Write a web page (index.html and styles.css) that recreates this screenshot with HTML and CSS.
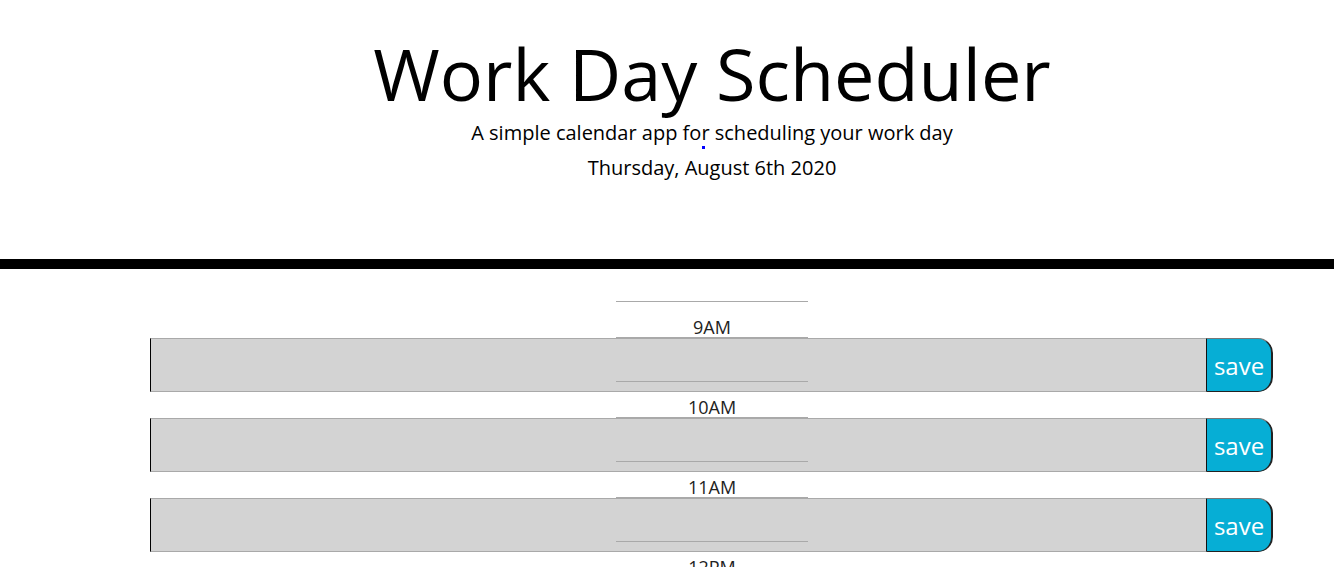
FILE: index.html
```html
<!DOCTYPE html>
<html lang="en">
<head>
<meta charset="utf-8">
<title>Work Day Scheduler</title>
<link rel="stylesheet" href="styles.css">
</head>
<body>
<header class="jumbotron">
  <div class="jumbo-inner">
    <h1 class="title">Work Day Scheduler</h1>
    <p class="lead">A simple calendar app for scheduling your work day</p>
    <span class="dot"></span>
    <p class="date">Thursday, August 6th 2020</p>
  </div>
</header>
<main class="container">
  <div class="hour">9AM</div>
  <div class="row">
    <textarea class="description"></textarea>
    <button class="save-btn">save</button>
  </div>
  <div class="hour">10AM</div>
  <div class="row">
    <textarea class="description"></textarea>
    <button class="save-btn">save</button>
  </div>
  <div class="hour">11AM</div>
  <div class="row">
    <textarea class="description"></textarea>
    <button class="save-btn">save</button>
  </div>
  <div class="hour">12PM</div>
  <div class="row">
    <textarea class="description"></textarea>
    <button class="save-btn">save</button>
  </div>
</main>
</body>
</html>
```
FILE: styles.css
```css
html, body {
  margin: 0;
  padding: 0;
  background: #fff;
  font-family: "Open Sans", "DejaVu Sans", sans-serif;
  color: #000;
}

.jumbotron {
  border-bottom: 10px solid #000;
  padding: 30px 0 0 90px;
  height: 229px;
}

.jumbo-inner {
  display: flex;
  flex-direction: column;
  align-items: center;
}

.title {
  margin: 0;
  font-size: 72px;
  font-weight: 400;
  line-height: 86px;
}

.lead {
  margin: 2px 0 0;
  font-size: 20px;
  font-weight: 400;
  line-height: 30px;
}

.dot {
  display: block;
  width: 3px;
  height: 3px;
  background: #0000ff;
  margin: -2px 0 4px -18px;
}

.date {
  margin: 0;
  font-size: 20px;
  line-height: 30px;
}

.container {
  display: flex;
  flex-direction: column;
  align-items: center;
  padding: 32px 0 0 90px;
}

.hour {
  position: relative;
  z-index: 1;
  width: 192px;
  height: 37px;
  box-sizing: border-box;
  border-top: 1px solid #a9a9a9;
  border-bottom: 1px solid #a9a9a9;
  padding-top: 13px;
  line-height: 24px;
  font-size: 18px;
  text-align: center;
  color: #222;
}

.row {
  display: flex;
  width: 1123px;
  height: 54px;
  margin: 0 0 -11px -1px;
}

.description {
  flex: 1;
  margin: 0;
  padding: 0;
  resize: none;
  background: #d3d3d3;
  border: none;
  border-top: 1px solid #a9a9a9;
  border-bottom: 1px solid #a9a9a9;
  border-left: 1px solid #000;
  box-sizing: border-box;
  height: 54px;
}

.save-btn {
  width: 67px;
  height: 54px;
  box-sizing: border-box;
  margin: 0;
  padding: 2px 0 0;
  background: #06aed5;
  color: #fff;
  font-family: "Open Sans", "DejaVu Sans", sans-serif;
  font-size: 24px;
  line-height: 1;
  border-top: 1px solid #777;
  border-left: 1px solid #111;
  border-right: 2px solid #222;
  border-bottom: 1px solid #222;
  border-radius: 0 15px 15px 0;
}
```
